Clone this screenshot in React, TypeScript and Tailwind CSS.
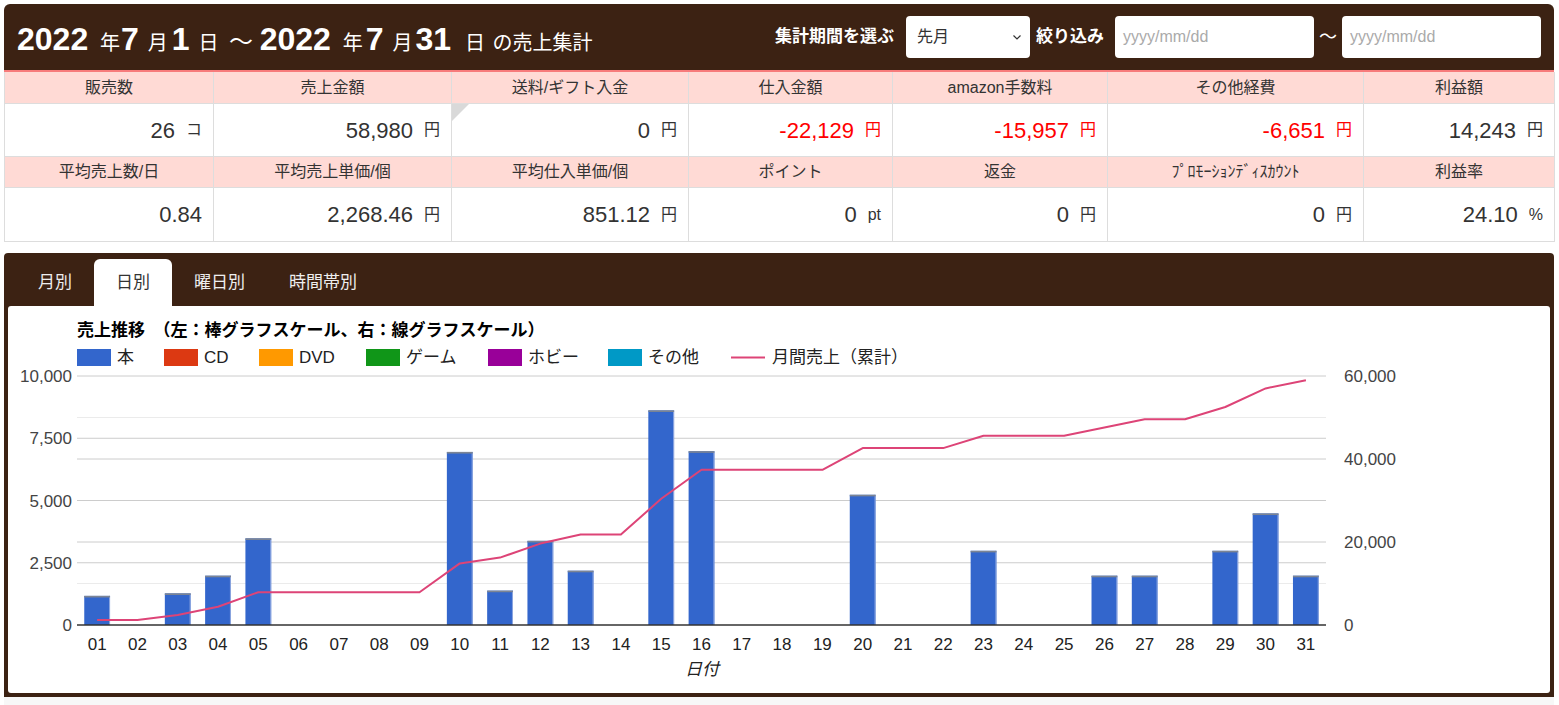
import React from "react";

const FONT = '"Liberation Sans", "Noto Sans CJK JP", sans-serif';

type Cell = { label: string; value: string; unit?: string; red?: boolean; tri?: boolean };

const row1: Cell[] = [
  { label: "販売数", value: "26", unit: "コ" },
  { label: "売上金額", value: "58,980", unit: "円" },
  { label: "送料/ギフト入金", value: "0", unit: "円", tri: true },
  { label: "仕入金額", value: "-22,129", unit: "円", red: true },
  { label: "amazon手数料", value: "-15,957", unit: "円", red: true },
  { label: "その他経費", value: "-6,651", unit: "円", red: true },
  { label: "利益額", value: "14,243", unit: "円" },
];
const row2: Cell[] = [
  { label: "平均売上数/日", value: "0.84" },
  { label: "平均売上単価/個", value: "2,268.46", unit: "円" },
  { label: "平均仕入単価/個", value: "851.12", unit: "円" },
  { label: "ポイント", value: "0", unit: "pt" },
  { label: "返金", value: "0", unit: "円" },
  { label: "ﾌﾟﾛﾓｰｼｮﾝﾃﾞｨｽｶｳﾝﾄ", value: "0", unit: "円" },
  { label: "利益率", value: "24.10", unit: "%" },
];

const daily = [1170, 0, 1270, 1980, 3480, 0, 0, 0, 0, 6950, 1380, 3380, 2180, 0, 8620, 6980, 0, 0, 0, 5230, 0, 0, 2980, 0, 0, 1980, 1980, 0, 2980, 4480, 1980];

function HeaderRow({ cells, h }: { cells: Cell[]; h: string }) {
  return (
    <>
      {cells.map((c, i) => (
        <div
          key={i}
          className={`${h} flex items-center justify-center bg-[#ffdad5] border-r border-b border-[#dddddd] text-[16px] text-[#333]`}
        >
          {c.label}
        </div>
      ))}
    </>
  );
}

function DataRow({ cells, h }: { cells: Cell[]; h: string }) {
  return (
    <>
      {cells.map((c, i) => (
        <div
          key={i}
          className={`${h} relative flex items-center justify-end pr-[11px] bg-white border-r border-b border-[#dddddd] ${c.red ? "text-[#ff0000]" : "text-[#333]"}`}
        >
          {c.tri && (
            <svg className="absolute left-0 top-0" width="18" height="18" viewBox="0 0 18 18">
              <polygon points="0,0 17,0 0,17" fill="#d9d9d9" />
            </svg>
          )}
          <span className="text-[22px]">{c.value}</span>
          {c.unit && <span className="text-[16px] ml-[11px]">{c.unit}</span>}
        </div>
      ))}
    </>
  );
}

function Chart() {
  const W = 1543;
  const H = 387;
  const left = 69;
  const right = 1318;
  const top = 70;
  const base = 319;
  const ph = base - top;
  const step = (right - left) / 31;
  const bw = step * 0.64;
  const yL = (v: number) => base - (v / 10000) * ph;
  const yR = (v: number) => base - (v / 60000) * ph;
  let cum = 0;
  const pts = daily.map((v, i) => {
    cum += v;
    return `${(left + step * (i + 0.5)).toFixed(1)},${yR(cum).toFixed(1)}`;
  });
  const legend = [
    { x: 69, c: "#3366cc", t: "本" },
    { x: 156, c: "#dc3912", t: "CD" },
    { x: 251, c: "#ff9900", t: "DVD" },
    { x: 358, c: "#109618", t: "ゲーム" },
    { x: 480, c: "#990099", t: "ホビー" },
    { x: 600, c: "#0099c6", t: "その他" },
  ];
  const minor = [yR(50000), yR(30000), yR(10000)];
  const majorL = [10000, 7500, 5000, 2500].map(yL);
  const majorR = [40000, 20000].map(yR);
  return (
    <svg width={W} height={H} style={{ fontFamily: FONT, display: "block" }}>
      <text x={69} y={30} fontSize={17} fontWeight="bold" fill="#000">
        売上推移　（左：棒グラフスケール、右：線グラフスケール）
      </text>
      {legend.map((l) => (
        <g key={l.t}>
          <rect x={l.x} y={43} width={34} height={17} fill={l.c} />
          <text x={l.x + 40} y={57} fontSize={17} fill="#222">
            {l.t}
          </text>
        </g>
      ))}
      <line x1={723} x2={757} y1={51.5} y2={51.5} stroke="#dd4477" strokeWidth={2} />
      <text x={764} y={57} fontSize={17} fill="#222">
        月間売上（累計）
      </text>
      {minor.map((y, i) => (
        <line key={`m${i}`} x1={left} x2={right} y1={y} y2={y} stroke="#ebebeb" strokeWidth={1} />
      ))}
      {[...majorL, ...majorR].map((y, i) => (
        <line key={`M${i}`} x1={left} x2={right} y1={y} y2={y} stroke="#cccccc" strokeWidth={1} />
      ))}
      {["10,000", "7,500", "5,000", "2,500", "0"].map((t, i) => (
        <text key={t} x={64} y={top + (ph / 4) * i + 6} fontSize={17} fill="#444" textAnchor="end">
          {t}
        </text>
      ))}
      {["60,000", "40,000", "20,000", "0"].map((t, i) => (
        <text key={t} x={1336} y={top + (ph / 3) * i + 6} fontSize={17} fill="#444">
          {t}
        </text>
      ))}
      {daily.map((v, i) => {
        if (!v) return null;
        const x = left + step * (i + 0.5) - bw / 2;
        const y = yL(v);
        return (
          <g key={i}>
            <rect x={x} y={y} width={bw} height={base - y} fill="#3366cc" />
            <rect x={x + bw - 1} y={y} width={1} height={base - y} fill="#8fa8e0" />
            <rect x={x} y={y} width={bw} height={1.6} fill="#7d8593" />
          </g>
        );
      })}
      <line x1={left} x2={right} y1={base} y2={base} stroke="#333" strokeWidth={1.5} />
      <polyline points={pts.join(" ")} fill="none" stroke="#dd4477" strokeWidth={2} strokeLinejoin="round" />
      {daily.map((_, i) => (
        <text key={i} x={left + step * (i + 0.5)} y={344} fontSize={17} fill="#222" textAnchor="middle">
          {String(i + 1).padStart(2, "0")}
        </text>
      ))}
      <text x={694} y={369} fontSize={17} fill="#222" textAnchor="middle" fontStyle="italic">
        日付
      </text>
    </svg>
  );
}

export default function App() {
  return (
    <div className="w-[1559px] h-[705px] bg-white overflow-hidden" style={{ fontFamily: FONT }}>
      <div className="pl-[4px] pr-[5px] pt-[4px]">
        {/* header */}
        <div className="h-[68px] bg-[#3c2213] rounded-t-[6px] border-b-2 border-[#f77b7b] flex items-center justify-between pl-[13px] pr-[13px]">
          <div className="text-white flex items-baseline whitespace-pre pt-[4px]">
            <span className="text-[32px] font-bold">2022 </span>
            <span className="text-[20px] ml-[3px]">年</span>
            <span className="text-[32px] font-bold ml-[1px]">7 </span>
            <span className="text-[20px]">月</span>
            <span className="text-[32px] font-bold ml-[4px]">1 </span>
            <span className="text-[20px]">日 </span>
            <span className="text-[24px] ml-[5px]">～ </span>
            <span className="text-[32px] font-bold">2022 </span>
            <span className="text-[20px] ml-[3px]">年</span>
            <span className="text-[32px] font-bold ml-[3px]">7 </span>
            <span className="text-[20px]">月</span>
            <span className="text-[32px] font-bold ml-[3px]">31 </span>
            <span className="text-[20px] ml-[5px]">日 </span>
            <span className="text-[20px] ml-[2px]">の売上集計</span>
          </div>
          <div className="flex items-center text-white">
            <span className="text-[17px] font-bold mr-[12px]">集計期間を選ぶ</span>
            <div className="w-[124px] h-[42px] bg-white rounded-[4px] flex items-center justify-between pl-[11px] pr-[8px] text-[#333] text-[16px]">
              <span>先月</span>
              <svg width="10" height="10" viewBox="0 0 10 10">
                <path d="M1.5 3.5 L5 7 L8.5 3.5" fill="none" stroke="#333" strokeWidth="1.2" />
              </svg>
            </div>
            <span className="text-[17px] font-bold ml-[6px] mr-[11px]">絞り込み</span>
            <div className="w-[199px] h-[42px] bg-white rounded-[4px] flex items-center pl-[8px] text-[#aaaaaa] text-[16px]">
              yyyy/mm/dd
            </div>
            <span className="text-[18px] mx-[5px]">～</span>
            <div className="w-[199px] h-[42px] bg-white rounded-[4px] flex items-center pl-[8px] text-[#aaaaaa] text-[16px]">
              yyyy/mm/dd
            </div>
          </div>
        </div>
        {/* table */}
        <div className="grid grid-cols-[209px_238px_237px_204px_215px_256px_191px] border-l border-[#dddddd]">
          <HeaderRow cells={row1} h="h-[32px]" />
          <DataRow cells={row1} h="h-[53px]" />
          <HeaderRow cells={row2} h="h-[31px]" />
          <DataRow cells={row2} h="h-[54px]" />
        </div>
        {/* tabs */}
        <div className="mt-[11px] bg-[#3c2213] rounded-t-[4px] px-[4px] pb-[4px]">
          <div className="h-[53px] flex items-end pl-[8px]">
            {["月別", "日別", "曜日別", "時間帯別"].map((t, i) =>
              i === 1 ? (
                <div key={t} className="h-[47px] px-[22px] bg-white rounded-t-[6px] flex items-center text-[17px] text-[#333]">
                  {t}
                </div>
              ) : (
                <div key={t} className="h-[47px] px-[22px] flex items-center text-[17px] text-[#eeeeee]">
                  {t}
                </div>
              )
            )}
          </div>
          <div className="bg-white rounded-[3px] h-[387px] overflow-hidden">
            <Chart />
          </div>
        </div>
        <div className="h-[10px] bg-[#f7f7f7]" />
      </div>
    </div>
  );
}
